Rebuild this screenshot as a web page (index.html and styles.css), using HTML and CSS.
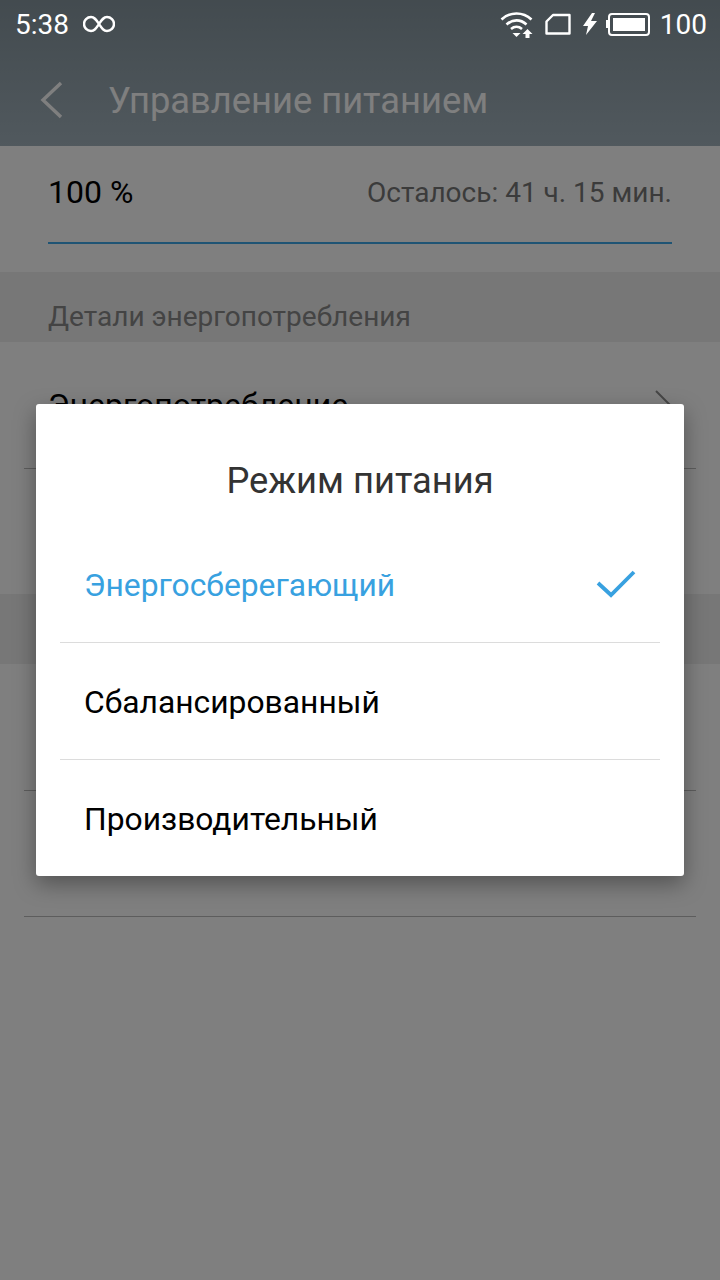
FILE: index.html
```html
<!DOCTYPE html>
<html lang="ru">
<head>
    <meta charset="UTF-8">
    <meta name="viewport" content="width=device-width, initial-scale=1.0">
    <title>Управление питанием</title>
    <link rel="stylesheet" href="styles.css">
</head>
<body>
    <div class="status-bar">
        <div class="status-left">
            <span class="status-time">5:38</span>
            <svg class="icon-infinity" width="32" height="20" viewBox="0 0 32 20"><path d="M16 10C13 5.500 11.500 3 8 3a7 7 0 0 0 0 14c3.500 0 5-2.500 8-7s4.500-7 8-7a7 7 0 0 1 0 14c-3.500 0-5-2.500-8-7z" fill="none" stroke="#fff" stroke-width="2.500"/></svg>
        </div>
        <div class="status-right">
            <svg class="icon-wifi" width="33" height="28" viewBox="0 0 33 28">
                <path d="M1.500 9.500C10 1.500 23 1.500 31.500 9.500" fill="none" stroke="#fff" stroke-width="2.600"/>
                <path d="M6.500 14.500c6-5.500 14-5.500 20 0" fill="none" stroke="#fff" stroke-width="2.600"/>
                <path d="M11 19c3.300-2.800 7.700-2.800 11 0" fill="none" stroke="#fff" stroke-width="2.600"/>
                <path d="M12.500 23h8l-4 4z" fill="#fff"/>
                <path d="M27.500 19l5 5h-3v4h-4v-4h-3z" fill="#fff"/>
            </svg>
            <svg class="icon-sim" width="26" height="22" viewBox="0 0 26 22"><path d="M8 2h16.500v18.500H1.500V8.500z" fill="none" stroke="#fff" stroke-width="2.400" stroke-linejoin="round"/></svg>
            <svg class="icon-bolt" width="14" height="22" viewBox="0 0 14 22"><path d="M9 0L0 13h5l-2 9 11-14H8l4-8z" fill="#fff"/></svg>
            <div class="battery">
                <span class="battery-tip"></span>
                <span class="battery-body"><span class="battery-fill"></span></span>
            </div>
            <span class="status-level">100</span>
        </div>
    </div>

    <div class="page">
        <div class="app-bar">
            <svg class="icon-back" width="24" height="38" viewBox="0 0 24 38"><path d="M21 2L3 19l18 17" fill="none" stroke="#fff" stroke-width="3.400"/></svg>
            <span class="app-title">Управление питанием</span>
        </div>

        <div class="charge">
            <div class="charge-row">
                <span class="charge-level">100 %</span>
                <span class="charge-left">Осталось: 41 ч. 15 мин.</span>
            </div>
        </div>

        <div class="section-head">Детали энергопотребления</div>
        <div class="row">
            <span class="row-label">Энергопотребление</span>
            <svg class="icon-chevron" width="18" height="32" viewBox="0 0 18 32"><path d="M2 2l14 14L2 30" fill="none" stroke="#000" stroke-opacity=".45" stroke-width="2"/></svg>
        </div>
        <div class="row row-last"></div>

        <div class="section-head"></div>
        <div class="row"></div>
        <div class="row"></div>
    </div>

    <div class="overlay">
        <div class="dialog">
            <h2 class="dialog-title">Режим питания</h2>
            <div class="option option-active">
                <span>Энергосберегающий</span>
                <svg class="icon-check" width="40" height="30" viewBox="0 0 40 30"><path d="M2 13l13 12L38 2" fill="none" stroke="#38a1e0" stroke-width="3.800"/></svg>
            </div>
            <div class="option"><span>Сбалансированный</span></div>
            <div class="option"><span>Производительный</span></div>
        </div>
    </div>
</body>
</html>
```

FILE: styles.css
```css
* {
    box-sizing: border-box;
}

html, body {
    height: 100%;
}

body {
    margin: 0;
    position: relative;
    height: 1280px;
    overflow: hidden;
    background-color: #ffffff;
    font-family: Roboto, sans-serif;
}

.status-bar {
    position: absolute;
    top: 0;
    left: 0;
    right: 0;
    z-index: 3;
    height: 50px;
    padding: 0 13px 2px 15px;
    display: flex;
    justify-content: space-between;
    align-items: center;
    color: #ffffff;
    font-size: 28px;
}

.status-left, .status-right {
    display: flex;
    align-items: center;
}

.icon-infinity {
    margin-left: 14px;
}

.icon-sim {
    margin-left: 12px;
}

.icon-bolt {
    margin-left: 12px;
}

.battery {
    margin-left: 9px;
    display: flex;
    align-items: center;
}

.battery-tip {
    width: 2px;
    height: 8px;
    background-color: #ffffff;
}

.battery-body {
    width: 42px;
    height: 23px;
    padding: 3px;
    border: 2px solid #ffffff;
    border-radius: 4px;
    display: block;
}

.battery-fill {
    display: block;
    height: 100%;
    background-color: #ffffff;
}

.status-level {
    margin-left: 10px;
}

.app-bar {
    height: 146px;
    padding: 54px 0 0 40px;
    display: flex;
    align-items: center;
    background: linear-gradient(#86969f, #a2b2bc);
}

.app-title {
    margin-left: 44px;
    font-size: 36.3px;
    color: #ffffff;
}

.charge {
    height: 126px;
    padding: 0 48px;
}

.charge-row {
    height: 98px;
    padding-bottom: 4px;
    display: flex;
    justify-content: space-between;
    align-items: center;
    border-bottom: 2px solid #3fa9e8;
}

.charge-level {
    font-size: 32px;
    color: #000000;
}

.charge-left {
    font-size: 28px;
    color: #777777;
}

.section-head {
    height: 70px;
    padding: 28px 48px 0;
    background-color: #eeeeee;
    font-size: 28px;
    color: #888888;
}

.row {
    height: 126px;
    margin: 0 24px;
    padding: 0 24px;
    display: flex;
    justify-content: space-between;
    align-items: center;
    border-bottom: 1px solid #bbbbbb;
}

.section-head + .row {
    height: 127px;
}

.section-head + .row.row-last {
    height: 125px;
}

.row-last {
    height: 125px;
    border-bottom: none;
}

.row-label {
    font-size: 32px;
    color: #000000;
}

.overlay {
    position: absolute;
    top: 0;
    left: 0;
    right: 0;
    bottom: 0;
    z-index: 2;
    display: flex;
    justify-content: center;
    align-items: center;
    background-color: rgba(0, 0, 0, 0.5);
}

.dialog {
    width: 648px;
    height: 472px;
    padding: 0 24px;
    background-color: #ffffff;
    border-radius: 3px;
    box-shadow: 0 8px 22px rgba(0, 0, 0, 0.35);
}

.dialog-title {
    margin: 0;
    height: 122px;
    padding-top: 54px;
    text-align: center;
    font-size: 36.3px;
    line-height: 46px;
    font-weight: normal;
    color: #333333;
}

.option {
    height: 117px;
    padding: 1px 24px 0 24px;
    display: flex;
    justify-content: space-between;
    align-items: center;
    border-bottom: 1px solid #dcdcdc;
    font-size: 31.8px;
    color: #000000;
}

.option:last-child {
    border-bottom: none;
}

.option-active {
    color: #38a1e0;
}
```
